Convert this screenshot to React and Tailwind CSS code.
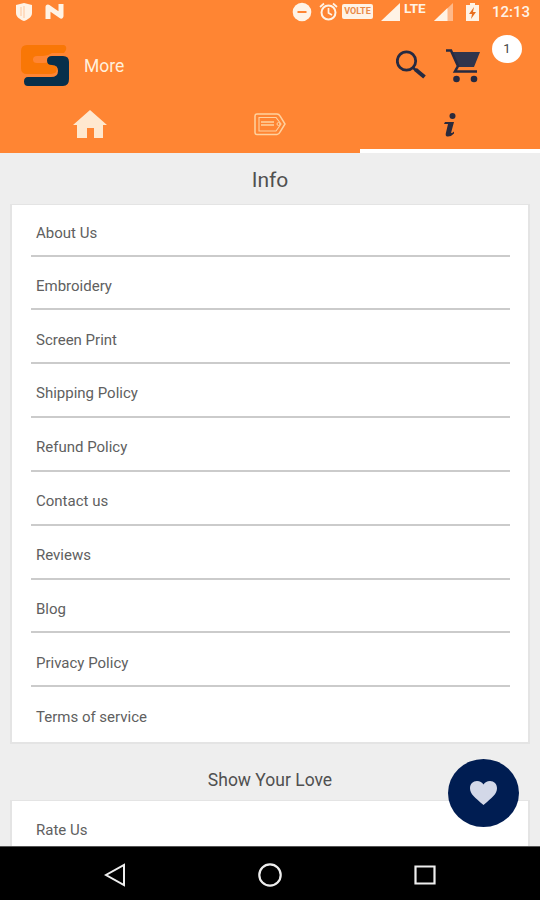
import React from 'react';

const infoLinks = [
  'About Us',
  'Embroidery',
  'Screen Print',
  'Shipping Policy',
  'Refund Policy',
  'Contact us',
  'Reviews',
  'Blog',
  'Privacy Policy',
  'Terms of service',
];

function StatusBar() {
  return (
    <div className="flex h-6 items-start justify-between pl-4 pr-[10px] text-[#fff3e6]">
      <div className="flex gap-[13px]">
        <svg className="mt-[3px] h-[18px] w-4" viewBox="0 0 16 18" fill="currentColor">
          <path d="M0 2 8 0l8 2v8c0 4-4 6.500-8 8-4-1.500-8-4-8-8Z" />
          <path d="M5 4v9M8 3v12" stroke="#ffc79c" strokeWidth="1" />
        </svg>
        <svg className="mt-1 h-[15px] w-[19px]" viewBox="0 0 19 15" fill="none" stroke="currentColor">
          <path d="M3 15V3l13 9V0" strokeWidth="5" strokeLinejoin="round" />
        </svg>
      </div>
      <div className="flex">
        <svg className="mt-0.5 h-5 w-5" viewBox="0 0 20 20">
          <circle cx="10" cy="10" r="9.300" fill="currentColor" />
          <path d="M5.500 10h9" stroke="#ff8533" strokeWidth="2" />
        </svg>
        <svg className="ml-[7px] mt-0.5 h-[19px] w-[19px]" viewBox="0 0 19 19" fill="none" stroke="currentColor" strokeWidth="2">
          <circle cx="9.500" cy="10.500" r="7" />
          <path d="M9.500 6v5l3.500 2M1 5l4-3.500M18 5l-4-3.500" strokeWidth="1.700" />
        </svg>
        <span className="ml-1 mt-1 flex h-[15px] w-[31px] items-center justify-center rounded-[2px] bg-[#fff3e6] text-[9px] font-bold text-[#e98a48]">
          VOLTE
        </span>
        <svg className="ml-[8px] mt-[3px] h-[18px] w-[19px]" viewBox="0 0 19 18" fill="currentColor">
          <path d="M19 0v18H0Z" />
        </svg>
        <span className="ml-1 mt-px w-[24px] text-[13.5px] font-bold leading-[14px]">LTE</span>
        <svg className="ml-1.5 mt-[3px] h-[18px] w-[19px]" viewBox="0 0 19 18">
          <path d="M19 0v18H0Z" fill="#ffb98a" />
          <path d="M13.500 5v13H0Z" fill="currentColor" />
        </svg>
        <svg className="ml-[13px] mt-[3px] h-[18px] w-[13px]" viewBox="0 0 13 18">
          <path d="M4 0h5v2h4v16H0V2h4Z" fill="currentColor" />
          <path d="M8 4 3 11h3l-1 5 5-7H7Z" fill="#e86f20" />
        </svg>
        <span className="ml-[13px] mt-0.5 text-[15px] font-medium leading-[20px]">12:13</span>
      </div>
    </div>
  );
}

function Logo() {
  return (
    <svg className="h-[42px] w-[49px]" viewBox="0 0 49 42">
      <path
        d="M6 0h37q3 1 2 5l-2 3H31q-4 3-9 3h-6q-4 0-4 3.500t4 3.500h6q4 0 6-1 3 3 7 4 3 7-5 8H6q-6 0-6-6V6q0-6 6-6Z"
        fill="#f97706"
      />
      <path
        d="M31 11h11q6 0 6 6v17q0 7-6 7H7q-4 0-4-4.500T7 32h23q7 0 7-6t-6-6q-5 0-5-4.500T31 11Z"
        fill="#072f4b"
      />
    </svg>
  );
}

function Header() {
  return (
    <header className="bg-[#ff8533]">
      <StatusBar />
      <div className="flex h-[84px] items-start pl-[21px] pr-[18px]">
        <div className="mt-[21px]">
          <Logo />
        </div>
        <h1 className="ml-3.5 mt-[30px] text-[17.5px] leading-6 text-[#fff0dc]">More</h1>
        <svg className="ml-auto mt-[26px] h-[30px] w-[31px]" viewBox="0 0 31 30" fill="none" stroke="#252a42">
          <circle cx="10.500" cy="11" r="9.200" strokeWidth="2.800" />
          <path d="m17 17.500 3 3" strokeWidth="2.500" />
          <path d="m19.500 19.500 9 7.500" strokeWidth="4" />
        </svg>
        <svg className="ml-[19px] mt-[25px] h-[34px] w-[35px]" viewBox="0 0 35 34">
          <path d="M5 3h29l-6 15H12Z" fill="#30354c" />
          <path d="M0 1.500h5L12 17l-3 5.500h22" fill="none" stroke="#252a42" strokeWidth="2.600" />
          <circle cx="10.500" cy="30" r="3.300" fill="#252a42" />
          <circle cx="28" cy="30" r="3.300" fill="#252a42" />
        </svg>
        <span className="ml-[11px] mt-[11px] flex h-7 w-[30px] items-center justify-center rounded-[50%] bg-white text-[13px] text-[#444]">
          1
        </span>
      </div>
      <nav className="grid h-[45px] grid-cols-3">
        <div className="flex justify-center">
          <svg className="mt-0.5 h-7 w-[34px]" viewBox="0 0 34 28" fill="#ffe8cf">
            <path d="M17 0 34 15h-4v13h-9V18h-7v10H4V15H0Z" />
          </svg>
        </div>
        <div className="flex justify-center">
          <svg className="mt-[5px] h-[23px] w-8" viewBox="0 0 32 23" fill="none" stroke="#ffd2a0">
            <path d="M3 1h20q2 0 3 2l5 8-5 8q-1 2.500-3 2.500H3q-2 0-2-2V3q0-2 2-2Z" strokeWidth="1.500" />
            <path d="M5 4.500h17l5 6.500-5 7H5Z" strokeWidth="1.100" />
            <path d="M7 9h13M7 12h13" strokeWidth="1.500" />
            <circle cx="24.500" cy="11" r="1.500" />
          </svg>
        </div>
        <div className="flex justify-center border-b-4 border-white">
          <svg className="mt-[5px] h-6 w-3" viewBox="0 0 12 24" fill="#2b2a3c">
            <circle cx="8.500" cy="3" r="3" />
            <path d="M1 9h9L7 20q1.500 0 3-1.500v2Q7 24 3 23.500q-2-.500-1-4L4 11H0Z" />
          </svg>
        </div>
      </nav>
    </header>
  );
}

function Card({ items }) {
  return (
    <div className="mx-2.5 border-2 border-t border-[#e4e4e4] bg-white pl-[19px] pr-[18px]">
      {items.map((item) => (
        <div
          key={item}
          className="flex h-[53.85px] items-center border-b-2 border-[#cbcbcb] pl-[5px] pt-[7px] text-[15px] text-[#606060] first:h-[51.5px] first:pt-1.5 last:h-[55px] last:border-b-0 last:pt-[5px] only:pt-0.5"
        >
          {item}
        </div>
      ))}
    </div>
  );
}

function NavBar() {
  return (
    <footer className="flex h-[54px] items-center justify-between border-t border-[#555] bg-black px-[104px] pt-0.5">
      <svg className="h-6 w-[22px]" viewBox="0 0 22 24" fill="none" stroke="#eee" strokeWidth="2">
        <path d="M20 2v20L2 12Z" />
      </svg>
      <svg className="h-6 w-6" viewBox="0 0 24 24" fill="none" stroke="#eee" strokeWidth="2.200">
        <circle cx="12" cy="12" r="10.700" />
      </svg>
      <svg className="h-5 w-[22px]" viewBox="0 0 22 20" fill="none" stroke="#eee" strokeWidth="2.200">
        <path d="M1.500 1.500h19v17h-19Z" />
      </svg>
    </footer>
  );
}

export default function App() {
  return (
    <div className="relative flex h-[900px] w-[540px] flex-col overflow-hidden bg-[#eee] font-[Roboto,sans-serif]">
      <Header />
      <main className="min-h-0 flex-1 overflow-hidden">
        <h2 className="flex h-[51px] items-center justify-center pt-1 text-[21px] text-[#505050]">Info</h2>
        <Card items={infoLinks} />
        <h2 className="flex h-14 items-center justify-center pt-4 text-[17.5px] text-[#505050]">Show Your Love</h2>
        <Card items={['Rate Us']} />
      </main>
      <NavBar />
      <button className="absolute left-[448px] top-[759px] flex h-[68px] w-[71px] items-center justify-center rounded-[50%] bg-[#001d52]">
        <svg className="h-6 w-[27px]" viewBox="0 0 27 24" fill="#d3d8e8">
          <path d="M13.500 24C5 16.500 0 13 0 7.200 0 3 3 0 7 0c3 0 5 1.500 6.500 3.500C15 1.500 17 0 20 0c4 0 7 3 7 7.200C27 13 22 16.500 13.500 24Z" />
        </svg>
      </button>
    </div>
  );
}
